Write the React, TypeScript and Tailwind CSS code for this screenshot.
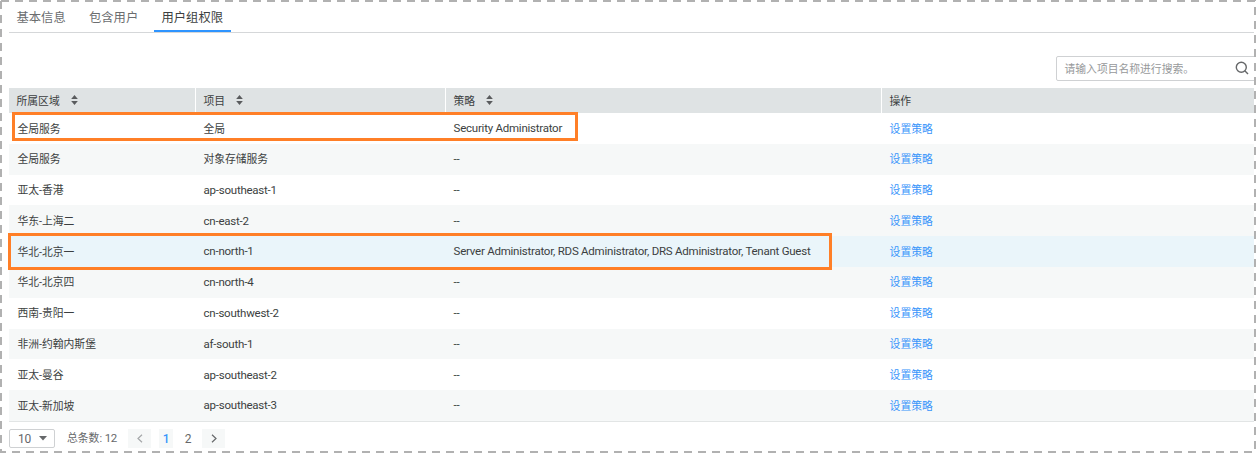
import React from "react";

type Row = { region: string; project: string; policy: string; active?: boolean };

const rows: Row[] = [
  { region: "全局服务", project: "全局", policy: "Security Administrator" },
  { region: "全局服务", project: "对象存储服务", policy: "--" },
  { region: "亚太-香港", project: "ap-southeast-1", policy: "--" },
  { region: "华东-上海二", project: "cn-east-2", policy: "--" },
  {
    region: "华北-北京一",
    project: "cn-north-1",
    policy: "Server Administrator, RDS Administrator, DRS Administrator, Tenant Guest",
    active: true,
  },
  { region: "华北-北京四", project: "cn-north-4", policy: "--" },
  { region: "西南-贵阳一", project: "cn-southwest-2", policy: "--" },
  { region: "非洲-约翰内斯堡", project: "af-south-1", policy: "--" },
  { region: "亚太-曼谷", project: "ap-southeast-2", policy: "--" },
  { region: "亚太-新加坡", project: "ap-southeast-3", policy: "--" },
];

const columns = "grid grid-cols-[186px_250px_436px_1fr]";

function SortIcon() {
  return (
    <svg width="7" height="10" viewBox="0 0 7 10" className="ml-[11px] shrink-0" fill="#595b5d">
      <path d="M0.2 4L3.5 0L6.8 4Z" />
      <path d="M0.2 6L3.5 10L6.8 6Z" />
    </svg>
  );
}

function Header({ label, sortable, first }: { label: string; sortable?: boolean; first?: boolean }) {
  return (
    <div className={`flex items-center pb-px ${first ? "pl-[7.5px]" : "border-l border-white pl-[7.5px]"}`}>
      <span className="pt-[4px]">{label}</span>
      {sortable && <SortIcon />}
    </div>
  );
}

function Cell({ text }: { text: string }) {
  const latin = /^[\x20-\x7e]+$/.test(text);
  return (
    <span className={latin ? "pt-px pl-[8.6px] text-[11.5px] tracking-[-0.24px]" : "pt-[2.4px] pl-[8.4px]"}>{text}</span>
  );
}

export default function App() {
  return (
    <div className="relative h-[453px] w-[1256px] overflow-hidden bg-white pl-[9px] font-[Roboto,'Noto_Sans_CJK_SC',sans-serif] text-[10.8px] whitespace-nowrap text-[#3c3f41]">
      <nav className="flex h-[33px] w-[1245px] gap-[7.5px] border-b border-[#d5d7d9] text-[12.3px] text-[#6b6d6f]">
        <div className="w-[65px] pt-[9px] pl-[7.5px] leading-[18px]">基本信息</div>
        <div className="w-[65px] pt-[9px] pl-[7.5px] leading-[18px]">包含用户</div>
        <div className="h-[32px] w-[77px] border-b-2 border-[#2e94ff] pt-[9px] pl-[7.5px] leading-[18px] text-[#3c3f41]">用户组权限</div>
      </nav>

      <div className="mt-[23px] ml-[1047px] flex h-[25px] w-[210px] items-center rounded-[2px] border border-[#cfd1d3] pl-[7.5px] text-[#97999b]">
        <span className="w-[170px] pt-[3px]">请输入项目名称进行搜索。</span>
        <svg width="14" height="14" viewBox="0 0 14 14" fill="none" stroke="#66686a" strokeWidth="1.4" className="mb-px">
          <circle cx="6.3" cy="6.2" r="5" />
          <path d="M9.8 9.7L13 12.9" />
        </svg>
      </div>

      <div className="mt-[7px] w-[1245px] border-b border-[#e2e5e5]">
        <div className={`${columns} h-[25px] bg-[#dfe3e4]`}>
          <Header label="所属区域" sortable first />
          <Header label="项目" sortable />
          <Header label="策略" sortable />
          <Header label="操作" />
        </div>
        {rows.map((row, i) => (
          <div
            key={i}
            className={`${columns} h-[30.8px] items-center ${row.active ? "bg-[#eaf5fa]" : i % 2 ? "bg-[#f6f8f8]" : "bg-white"}`}
          >
            <Cell text={row.region} />
            <Cell text={row.project} />
            <Cell text={row.policy} />
            <a className="pt-[2.4px] pl-[8.6px] text-[#3995fb]">设置策略</a>
          </div>
        ))}
      </div>

      <div className="mt-[7px] flex h-[19px] items-center text-[12px] tracking-[-0.2px] text-[#66686a]">
        <div className="flex h-[19px] w-[46px] items-center rounded-[2px] border border-[#cfd1d3] pl-2">
          <span className="w-[21px] pt-px">10</span>
          <svg width="8" height="5" viewBox="0 0 8 5" fill="#66686a">
            <path d="M0 0H8L4 4.5Z" />
          </svg>
        </div>
        <span className="ml-3 w-[61px] pt-px text-[10.8px] tracking-normal">
          总条数: <span className="text-[11.5px] tracking-[-0.3px]">12</span>
        </span>
        <div className="flex h-[19px] w-[23px] items-center justify-center bg-[#f6f8f8]">
          <svg width="6" height="9" viewBox="0 0 6 9" fill="none" stroke="#a5a7a9" strokeWidth="1.2">
            <path d="M5 0.7L1 4.5L5 8.3" />
          </svg>
        </div>
        <div className="ml-2 flex h-[19px] w-[14px] items-center justify-center bg-[#f6f8f8] pt-px font-medium text-[#3995fb]">1</div>
        <div className="ml-2 flex w-[14px] justify-center pt-px">2</div>
        <div className="ml-[7px] flex h-[19px] w-[23px] items-center justify-center bg-[#f6f8f8]">
          <svg width="6" height="9" viewBox="0 0 6 9" fill="none" stroke="#66686a" strokeWidth="1.2">
            <path d="M1 0.7L5 4.5L1 8.3" />
          </svg>
        </div>
      </div>

      <div className="absolute top-[112px] left-[12px] h-[29px] w-[566px] border-3 border-[#ff7f27]" />
      <div className="absolute top-[233px] left-[8px] h-[37px] w-[824px] border-3 border-[#ff7f27]" />

      <div className="absolute top-0 right-0 bottom-0 w-[2px] bg-white" />
      <div className="absolute top-0 left-[-5px] h-[2px] w-[1261px] bg-[repeating-linear-gradient(90deg,transparent_0_6px,#b1b1b1_6px_14px)]" />
      <div className="absolute top-[-5px] left-0 h-[458px] w-[2px] bg-[repeating-linear-gradient(180deg,transparent_0_6px,#b1b1b1_6px_14px)]" />
      <div className="absolute top-[-13px] right-0 h-[466px] w-[2px] bg-[repeating-linear-gradient(180deg,transparent_0_6px,#b1b1b1_6px_14px)]" />
      <div className="absolute bottom-0 left-[-8px] h-[2px] w-[1264px] bg-[repeating-linear-gradient(90deg,transparent_0_6px,#b1b1b1_6px_14px)]" />
    </div>
  );
}
